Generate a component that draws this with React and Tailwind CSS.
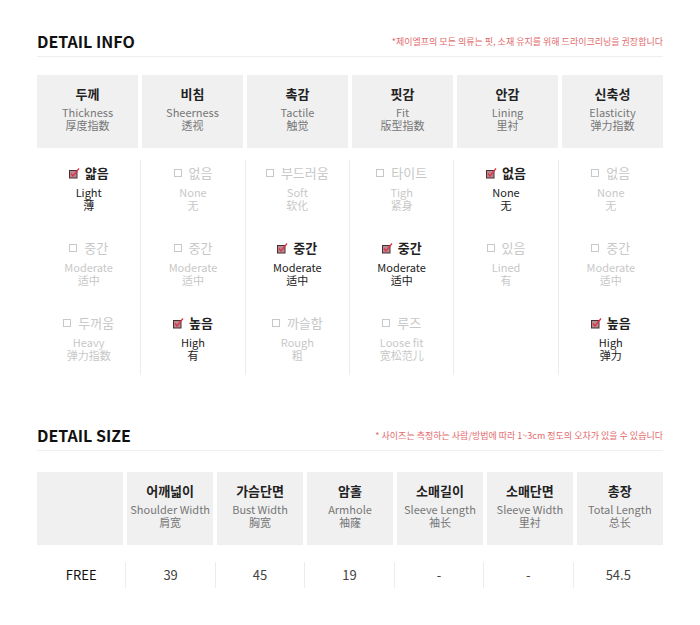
import React from "react";

const FONT = { fontFamily: '"Noto Sans CJK KR", "Noto Sans", sans-serif' };

function CheckIcon() {
  return (
    <svg width="11" height="11" viewBox="0 0 11 11" className="inline-block mr-[5px] -mt-[2px] align-middle">
      <rect x="0.5" y="2.5" width="7.5" height="7.5" fill="#b58a8f" stroke="#4a2f33" strokeWidth="1" />
      <path d="M2 5.5 L4 8 L10 0.5" fill="none" stroke="#e0314a" strokeWidth="1.3" />
    </svg>
  );
}

function EmptyBox() {
  return <span className="inline-block w-[8px] h-[8px] border border-[#c8c8c8] mr-[7px] align-middle -mt-[2px]" />;
}

const info = [
  {
    ko: "두께", en: "Thickness", zh: "厚度指数",
    opts: [
      { ko: "얇음", en: "Light", zh: "薄", on: true },
      { ko: "중간", en: "Moderate", zh: "适中" },
      { ko: "두꺼움", en: "Heavy", zh: "弹力指数" },
    ],
  },
  {
    ko: "비침", en: "Sheerness", zh: "透视",
    opts: [
      { ko: "없음", en: "None", zh: "无" },
      { ko: "중간", en: "Moderate", zh: "适中" },
      { ko: "높음", en: "High", zh: "有", on: true },
    ],
  },
  {
    ko: "촉감", en: "Tactile", zh: "触觉",
    opts: [
      { ko: "부드러움", en: "Soft", zh: "软化" },
      { ko: "중간", en: "Moderate", zh: "适中", on: true },
      { ko: "까슬함", en: "Rough", zh: "粗" },
    ],
  },
  {
    ko: "핏감", en: "Fit", zh: "版型指数",
    opts: [
      { ko: "타이트", en: "Tigh", zh: "紧身" },
      { ko: "중간", en: "Moderate", zh: "适中", on: true },
      { ko: "루즈", en: "Loose fit", zh: "宽松范儿" },
    ],
  },
  {
    ko: "안감", en: "Lining", zh: "里衬",
    opts: [
      { ko: "없음", en: "None", zh: "无", on: true },
      { ko: "있음", en: "Lined", zh: "有" },
      null,
    ],
  },
  {
    ko: "신축성", en: "Elasticity", zh: "弹力指数",
    opts: [
      { ko: "없음", en: "None", zh: "无" },
      { ko: "중간", en: "Moderate", zh: "适中" },
      { ko: "높음", en: "High", zh: "弹力", on: true },
    ],
  },
];

const sizeCols = [
  { ko: "어깨넓이", en: "Shoulder Width", zh: "肩宽", v: "39" },
  { ko: "가슴단면", en: "Bust Width", zh: "胸宽", v: "45" },
  { ko: "암홀", en: "Armhole", zh: "袖窿", v: "19" },
  { ko: "소매길이", en: "Sleeve Length", zh: "袖长", v: "-" },
  { ko: "소매단면", en: "Sleeve Width", zh: "里衬", v: "-" },
  { ko: "총장", en: "Total Length", zh: "总长", v: "54.5" },
];

function HeadCell({ ko, en, zh }) {
  return (
    <div className="bg-[#f0f0f0] h-[73px] flex flex-col items-center pt-[10px]">
      <div className="text-[13px] leading-[18px] font-bold text-[#222]">{ko}</div>
      <div className="text-[11px] leading-[13px] text-[#777] mt-[3px] text-center">
        {en}
        <br />
        {zh}
      </div>
    </div>
  );
}

function Option({ o }) {
  if (!o) return <div className="h-[49px]" />;
  const c = o.on ? "text-[#222]" : "text-[#c8c8c8]";
  return (
    <div className="h-[49px] flex flex-col items-center">
      <div className={`text-[13px] leading-[18px] whitespace-nowrap ${o.on ? "font-bold text-[#222]" : "text-[#c8c8c8]"}`}>
        {o.on ? <CheckIcon /> : <EmptyBox />}
        {o.ko}
      </div>
      <div className={`mt-[4px] text-[11px] leading-[13px] text-center ${c}`}>
        {o.en}
        <br />
        {o.zh}
      </div>
    </div>
  );
}

function Title({ text, note }) {
  return (
    <div className="flex items-end justify-between border-b border-[#eeeeee] pb-[3px]">
      <div className="text-[16px] leading-[24px] font-bold text-[#111]">{text}</div>
      <div className="text-[9px] leading-[14px] text-[#e26a6c] pb-[4px]">{note}</div>
    </div>
  );
}

export default function App() {
  return (
    <div style={FONT} className="w-[700px] h-[625px] bg-white px-[37px] pt-[29px]">
      <Title text="DETAIL INFO" note="*제이엘프의 모든 의류는 핏, 소재 유지를 위해 드라이크리닝을 권장합니다" />
      <div className="mt-[18px] grid grid-cols-6 gap-x-[4px]">
        {info.map((c, i) => (
          <HeadCell key={i} {...c} />
        ))}
      </div>
      <div className="mt-[12px] grid grid-cols-6">
        {info.map((c, i) => (
          <div key={i} className={`pt-[4px] pb-[12px] flex flex-col gap-[26px] ${i < 5 ? "border-r border-[#ececec]" : ""}`}>
            {c.opts.map((o, j) => (
              <Option key={j} o={o} />
            ))}
          </div>
        ))}
      </div>

      <div className="mt-[48px]">
        <Title text="DETAIL SIZE" note="* 사이즈는 측정하는 사람/방법에 따라 1~3cm 정도의 오차가 있을 수 있습니다" />
      </div>
      <div className="mt-[21px] grid grid-cols-7 gap-x-[3.5px]">
        <div className="bg-[#f0f0f0] h-[73px]" />
        {sizeCols.map((c, i) => (
          <HeadCell key={i} {...c} />
        ))}
      </div>
      <div className="mt-[17px] grid grid-cols-7">
        <div className="h-[26px] flex items-center justify-center text-[13px] text-[#111] border-r border-[#ececec]">FREE</div>
        {sizeCols.map((c, i) => (
          <div key={i} className={`h-[26px] flex items-center justify-center text-[13px] text-[#444] ${i < 5 ? "border-r border-[#ececec]" : ""}`}>
            {c.v}
          </div>
        ))}
      </div>
    </div>
  );
}
